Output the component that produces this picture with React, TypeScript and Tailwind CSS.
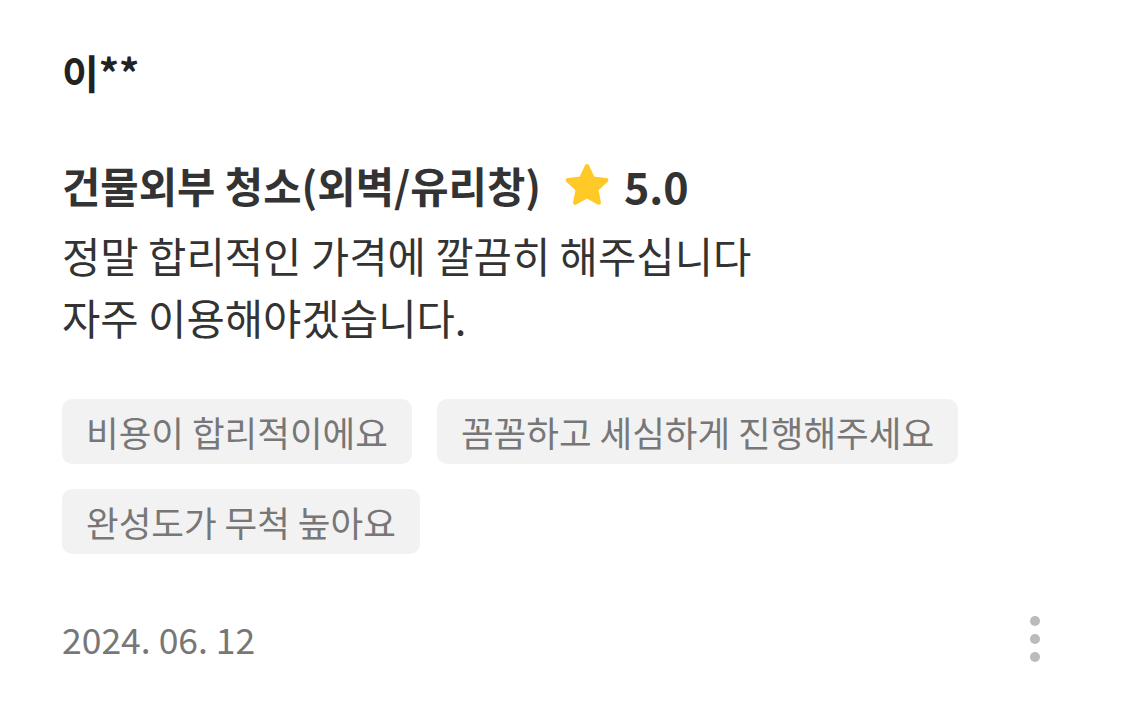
import React from 'react';

const FONT = { fontFamily: '"Noto Sans CJK KR", "Noto Sans", sans-serif' };

const tags = ['비용이 합리적이에요', '꼼꼼하고 세심하게 진행해주세요', '완성도가 무척 높아요'];

const Star: React.FC = () => (
  <svg width="48" height="44" viewBox="0 0 24 22" className="shrink-0">
    <path
      d="M12 1.6l2.9 6.2 6.7.8-5 4.6 1.3 6.6L12 16.5l-5.9 3.3 1.3-6.6-5-4.6 6.7-.8z"
      fill="#FFC928"
      stroke="#FFC928"
      strokeWidth="2.2"
      strokeLinejoin="round"
    />
  </svg>
);

const App: React.FC = () => {
  return (
    <div className="min-h-screen bg-white text-[#333]" style={FONT}>
      <div className="pl-[62px] pr-[83px] pt-[42px]">
        {/* reviewer */}
        <div className="text-[40px] font-bold leading-[60px] text-[#222]">이**</div>

        {/* service + rating */}
        <div className="mt-[53px] flex h-[60px] items-center">
          <span className="text-[41.7px] font-semibold leading-[60px]">건물외부 청소(외벽/유리창)</span>
          <span className="ml-[22px] flex"><Star /></span>
          <span className="ml-[13px] text-[43px] font-bold leading-[60px]">5.0</span>
        </div>

        {/* body */}
        <p className="mt-[9px] text-[41.7px] leading-[62px] text-[#333]">
          정말 합리적인 가격에 깔끔히 해주십니다
          <br />
          자주 이용해야겠습니다.
        </p>

        {/* tags */}
        <div className="mt-[51px] flex flex-wrap gap-[25px]">
          {tags.map(t => (
            <span
              key={t}
              className="flex h-[65px] items-center rounded-[10px] bg-[#f2f2f2] px-[24px] text-[35.5px] text-[#777]"
            >
              {t}
            </span>
          ))}
        </div>

        {/* footer */}
        <div className="mt-[60px] flex h-[50px] items-center justify-between">
          <span className="text-[35.5px] leading-[50px] text-[#777]">2024. 06. 12</span>
          <div className="flex flex-col gap-[8px]">
            <span className="h-[10px] w-[10px] rounded-full bg-[#bbb]" />
            <span className="h-[10px] w-[10px] rounded-full bg-[#bbb]" />
            <span className="h-[10px] w-[10px] rounded-full bg-[#bbb]" />
          </div>
        </div>
      </div>
    </div>
  );
};

export default App;
